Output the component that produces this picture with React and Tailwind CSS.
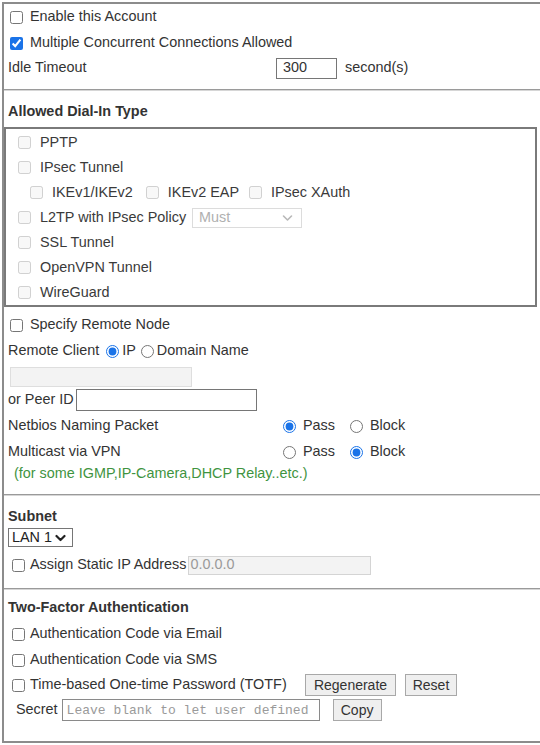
import React from 'react'

// Dial-in user profile form: account flags, dial-in types, remote node, subnet and 2FA
function Check({ checked = false, disabled = false, className = '' }) {
    return (
        <input
            type="checkbox"
            defaultChecked={checked}
            disabled={disabled}
            className={`m-0 h-[13px] w-[13px] shrink-0 accent-[#1a73e8] ${className}`}
        />
    )
}

function Radio({ name, checked = false, className = '' }) {
    return (
        <input
            type="radio"
            name={name}
            defaultChecked={checked}
            className={`m-0 h-[13px] w-[13px] shrink-0 accent-[#1a73e8] ${className}`}
        />
    )
}

function Chevron({ color = '#333', width = 2 }) {
    return (
        <svg width="11" height="8" viewBox="0 0 11 8" className="shrink-0">
            <polyline points="1.5,2 5.5,6 9.5,2" fill="none" stroke={color} strokeWidth={width} strokeLinecap="round" strokeLinejoin="round" />
        </svg>
    )
}

function Divider() {
    return <div className="h-[2px] w-full border-t border-[#9a9a9a] border-b border-b-[#d6d6d6]" />
}

function Btn({ children, className = '' }) {
    return (
        <button className={`h-[22px] border border-[#a8a8a8] bg-[#efefef] px-[6px] text-[14px] leading-none text-[#333] ${className}`}>
            {children}
        </button>
    )
}

export default function App() {
    return (
        <div className="ml-[2px] mt-[2px] h-[741px] w-[538px] border-2 border-r-0 border-[#8c8c8c] bg-white font-['Liberation_Sans',Arial,sans-serif] text-[14.4px] text-[#333]">
            {/* Account */}
            <div className="flex h-[26px] items-center pl-[6px]">
                <Check className="mr-[7px]" />
                <span>Enable this Account</span>
            </div>
            <div className="flex h-[26px] items-center pl-[6px]">
                <Check checked className="mr-[7px]" />
                <span>Multiple Concurrent Connections Allowed</span>
            </div>
            <div className="flex h-[24px] items-center pl-[4px]">
                <span className="w-[268px]">Idle Timeout</span>
                <input
                    defaultValue="300"
                    className="h-[21px] w-[61px] border border-[#767676] px-[6px] text-[14.4px] outline-none"
                />
                <span className="ml-[8px]">second(s)</span>
            </div>

            <div className="mt-[9px]">
                <Divider />
            </div>

            {/* Allowed Dial-In Type */}
            <div className="mt-[9px] flex h-[24px] items-center pl-[4px] font-bold">Allowed Dial-In Type</div>
            <div className="mt-[3px] h-[180px] w-[533px] border-2 border-[#7a7a7a] pt-px pl-[12px] text-[#3a3a3a]">
                <div className="flex h-[25px] items-center">
                    <Check disabled className="mr-[9px]" />
                    <span>PPTP</span>
                </div>
                <div className="flex h-[25px] items-center">
                    <Check disabled className="mr-[9px]" />
                    <span>IPsec Tunnel</span>
                </div>
                <div className="flex h-[25px] items-center pl-[12px]">
                    <Check disabled className="mr-[9px]" />
                    <span>IKEv1/IKEv2</span>
                    <Check disabled className="ml-[13px] mr-[9px]" />
                    <span>IKEv2 EAP</span>
                    <Check disabled className="ml-[10px] mr-[9px]" />
                    <span>IPsec XAuth</span>
                </div>
                <div className="flex h-[25px] items-center">
                    <Check disabled className="mr-[9px]" />
                    <span>L2TP with IPsec Policy</span>
                    <div className="ml-[6px] flex h-[20px] w-[110px] items-center justify-between border border-[#dcdcdc] pl-[6px] pr-[8px] text-[#b0b0b0]">
                        <span>Must</span>
                        <Chevron color="#b8b8b8" width={1.6} />
                    </div>
                </div>
                <div className="flex h-[25px] items-center">
                    <Check disabled className="mr-[9px]" />
                    <span>SSL Tunnel</span>
                </div>
                <div className="flex h-[25px] items-center">
                    <Check disabled className="mr-[9px]" />
                    <span>OpenVPN Tunnel</span>
                </div>
                <div className="flex h-[25px] items-center">
                    <Check disabled className="mr-[9px]" />
                    <span>WireGuard</span>
                </div>
            </div>

            {/* Remote node */}
            <div className="mt-[5px] flex h-[26px] items-center pl-[6px]">
                <Check className="mr-[7px]" />
                <span>Specify Remote Node</span>
            </div>
            <div className="flex h-[26px] items-center pl-[4px]">
                <span>Remote Client</span>
                <Radio name="client" checked className="ml-[7px] mr-[3px]" />
                <span>IP</span>
                <Radio name="client" className="ml-[5px] mr-[3px]" />
                <span>Domain Name</span>
            </div>
            <div className="pl-[6px] pt-[3px]">
                <div className="h-[20px] w-[182px] border border-[#dedede] bg-[#f3f3f3]" />
            </div>
            <div className="mt-px flex h-[23px] items-center pl-[4px]">
                <span>or Peer ID</span>
                <input className="ml-[2px] h-[22px] w-[181px] border border-[#767676] px-[4px] outline-none" />
            </div>
            <div className="mt-[2px] flex h-[26px] items-center pl-[4px]">
                <span className="w-[275px]">Netbios Naming Packet</span>
                <Radio name="netbios" checked className="mr-[7px]" />
                <span className="w-[47px]">Pass</span>
                <Radio name="netbios" className="mr-[7px]" />
                <span>Block</span>
            </div>
            <div className="flex h-[26px] items-center pl-[4px]">
                <span className="w-[275px]">Multicast via VPN</span>
                <Radio name="multicast" className="mr-[7px]" />
                <span className="w-[47px]">Pass</span>
                <Radio name="multicast" checked className="mr-[7px]" />
                <span>Block</span>
            </div>
            <div className="flex h-[18px] items-center pl-[10px] text-[#3f943f]">
                (for some IGMP,IP-Camera,DHCP Relay..etc.)
            </div>

            <div className="mt-[11px]">
                <Divider />
            </div>

            {/* Subnet */}
            <div className="mt-[10px] flex h-[22px] items-center pl-[4px] font-bold">Subnet</div>
            <div className="pl-[4px]">
                <div className="flex h-[19px] w-[65px] items-center justify-between border border-[#767676] pl-[3px] pr-[6px] text-[#222]">
                    <span>LAN 1</span>
                    <Chevron color="#222" width={2.2} />
                </div>
            </div>
            <div className="mt-[6px] flex h-[24px] items-center pl-[8px]">
                <Check className="mr-[5px]" />
                <span>Assign Static IP Address</span>
                <div className="ml-px flex h-[19px] w-[183px] items-center border border-[#d4d4d4] bg-[#f3f3f3] pl-[2px] text-[#9a9a9a]">
                    0.0.0.0
                </div>
            </div>

            <div className="mt-[11px]">
                <Divider />
            </div>

            {/* Two-Factor Authentication */}
            <div className="mt-[7px] flex h-[22px] items-center pl-[4px] font-bold">Two-Factor Authentication</div>
            <div className="mt-[2px] flex h-[26px] items-center pl-[8px]">
                <Check className="mr-[5px]" />
                <span>Authentication Code via Email</span>
            </div>
            <div className="flex h-[26px] items-center pl-[8px]">
                <Check className="mr-[5px]" />
                <span>Authentication Code via SMS</span>
            </div>
            <div className="flex h-[24px] items-center pl-[8px]">
                <Check className="mr-[5px]" />
                <span className="w-[275px]">Time-based One-time Password (TOTF)</span>
                <Btn className="w-[91px]">Regenerate</Btn>
                <Btn className="ml-[9px] w-[52px]">Reset</Btn>
            </div>
            <div className="flex h-[26px] items-center pl-[12px]">
                <span>Secret</span>
                <input
                    placeholder="Leave blank to let user defined"
                    className="ml-[4px] h-[22px] w-[258px] border border-[#8a8a8a] px-[4px] font-['Liberation_Mono',monospace] text-[13px] outline-none placeholder:text-[#9a9a9a]"
                />
                <Btn className="ml-[13px] w-[49px]">Copy</Btn>
            </div>
        </div>
    )
}
